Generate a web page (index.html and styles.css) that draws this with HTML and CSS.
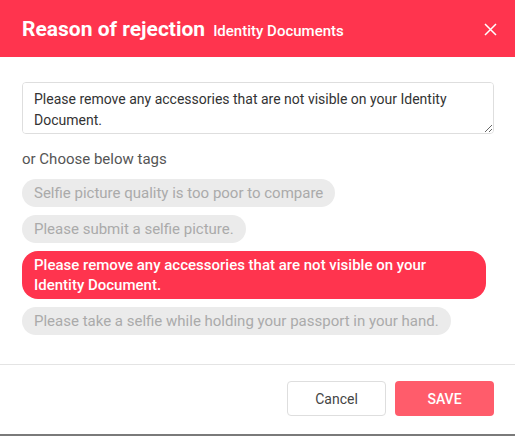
FILE: index.html
```html
<!DOCTYPE html>
<html>
<head>
<meta charset="utf-8">
<link rel="stylesheet" href="styles.css">
</head>
<body>
<div class="modal">
  <div class="header">
    <div class="titles">
      <span class="title">Reason of rejection</span>
      <span class="subtitle">Identity Documents</span>
    </div>
    <button class="close" aria-label="Close">
      <svg width="13" height="13" viewBox="0 0 13 13"><path d="M1 1L12 12M12 1L1 12" stroke="#fff" stroke-width="1.5" fill="none"/></svg>
    </button>
  </div>
  <div class="body">
    <textarea class="reason">Please remove any accessories that are not visible on your Identity Document.</textarea>
    <div class="label">or Choose below tags</div>
    <div class="tags">
      <span class="tag">Selfie picture quality is too poor to compare</span>
      <span class="tag">Please submit a selfie picture.</span>
      <span class="tag selected">Please remove any accessories that are not visible on your Identity Document.</span>
      <span class="tag">Please take a selfie while holding your passport in your hand.</span>
    </div>
  </div>
  <div class="footer">
    <button class="btn cancel">Cancel</button>
    <button class="btn save">SAVE</button>
  </div>
</div>
</body>
</html>
```
FILE: styles.css
```css
* { box-sizing: border-box; }
html, body { margin: 0; padding: 0; background: #fff; }
body { font-family: Roboto, "Liberation Sans", sans-serif; width: 515px; height: 436px; overflow: hidden; }
.modal { height: 436px; display: flex; flex-direction: column; border-bottom: 2px solid #7a7a7a; }
.header { height: 57px; background: #ff344e; display: flex; align-items: center; justify-content: space-between; padding: 0 18px 0 22px; }
.titles { display: flex; align-items: baseline; gap: 8px; color: #fff; padding-top: 1px; }
.title { font-size: 21px; font-weight: 700; }
.subtitle { font-size: 15px; font-weight: 500; }
.close { background: none; border: 0; padding: 0; width: 14px; height: 14px; display: flex; align-items: center; justify-content: center; margin-top: 2px; cursor: pointer; }
.body { flex: 1; padding: 25px 21px 0 22px; }
.reason { display: block; width: 100%; height: 52px; border: 1px solid #dedede; border-radius: 4px; padding: 6px 11px; font-family: Roboto, "Liberation Sans", sans-serif; font-size: 14px; line-height: 21px; color: #333; resize: vertical; }
.label { margin-top: 15px; font-size: 15px; line-height: 20px; color: #555; }
.tags { margin-top: 10px; }
.tag { display: inline-block; margin: 0 8px 8px 0; padding: 4px 12px; border-radius: 14px; background: #ebebeb; color: #aaa; font-size: 15px; line-height: 20px; vertical-align: top; }
.tag.selected { background: #ff344e; color: #fff; font-weight: 500; border-radius: 16px; }
.footer { height: 70px; border-top: 1px solid #e4e4e4; display: flex; justify-content: flex-end; align-items: flex-start; gap: 9px; padding: 16px 21px 0 0; }
.btn { width: 99px; height: 35px; border-radius: 4px; font-family: Roboto, "Liberation Sans", sans-serif; font-size: 14px; cursor: pointer; }
.cancel { background: #fff; border: 1px solid #dedede; color: #444; }
.save { background: #ff5c6b; border: 0; color: #fff; font-weight: 500; }
```
